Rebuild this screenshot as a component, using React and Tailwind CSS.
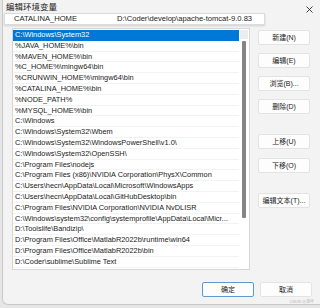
import React from "react";

const paths = [
  "C:\\Windows\\System32",
  "%JAVA_HOME%\\bin",
  "%MAVEN_HOME%\\bin",
  "%C_HOME%\\mingw64\\bin",
  "%CRUNWIN_HOME%\\mingw64\\bin",
  "%CATALINA_HOME%\\bin",
  "%NODE_PATH%",
  "%MYSQL_HOME%\\bin",
  "C:\\Windows",
  "C:\\Windows\\System32\\Wbem",
  "C:\\Windows\\System32\\WindowsPowerShell\\v1.0\\",
  "C:\\Windows\\System32\\OpenSSH\\",
  "C:\\Program Files\\nodejs",
  "C:\\Program Files (x86)\\NVIDIA Corporation\\PhysX\\Common",
  "C:\\Users\\hecn\\AppData\\Local\\Microsoft\\WindowsApps",
  "C:\\Users\\hecn\\AppData\\Local\\GitHubDesktop\\bin",
  "C:\\Program Files\\NVIDIA Corporation\\NVIDIA NvDLISR",
  "C:\\Windows\\system32\\config\\systemprofile\\AppData\\Local\\Micr...",
  "D:\\Toolslife\\Bandizip\\",
  "D:\\Program Files\\Office\\MatlabR2022b\\runtime\\win64",
  "D:\\Program Files\\Office\\MatlabR2022b\\bin",
  "D:\\Coder\\sublime\\Sublime Text",
];

function Btn({ children, className = "", primary = false }) {
  return (
    <div
      className={`h-[15px] w-[52px] shrink-0 flex items-center justify-center rounded-[2px] bg-[#fdfdfd] text-[7px] leading-[10px] text-[#1b1b1b] ${
        primary ? "border border-[#5b9bd5]" : "border border-[#e3e3e3]"
      } ${className}`}
    >
      {children}
    </div>
  );
}

export default function App() {
  return (
    <div
      className="relative w-[320px] h-[308px] overflow-hidden bg-[#e6e6e6]"
      style={{ fontFamily: '"Liberation Sans", "Noto Sans CJK SC", sans-serif' }}
    >
      <div className="ml-[2px] w-[318px] h-[305px] bg-[#f3f3f3] border-l border-b border-[#c9c9c9] rounded-bl-[6px]">
        {/* title bar */}
        <div className="h-[28px] flex items-start justify-between">
          <span className="mt-[1px] ml-[3px] text-[8.5px] leading-[12px] text-[#1a1a1a]">编辑环境变量</span>
          <svg width="7" height="7" viewBox="0 0 7 7" className="mt-[6px] mr-[7px]">
            <path d="M0.5 0.5 L6.5 6.5 M6.5 0.5 L0.5 6.5" stroke="#2a2a2a" strokeWidth="0.9" />
          </svg>
        </div>

        <div className="h-[242px] flex">
          {/* list */}
          <div className="ml-[9px] w-[238px] h-[242px] shrink-0 bg-white border border-[#d6d6d6] flex overflow-hidden">
            <div className="flex-1 pt-[1px] overflow-hidden">
              {paths.map((p, i) => (
                <div
                  key={i}
                  className={`h-[10.8px] leading-[10px] pl-[2px] whitespace-nowrap overflow-hidden text-[7.4px] ${
                    i === 0
                      ? "bg-[#0078d7] text-white"
                      : "text-[#1a1a1a] border-b border-[#f3f3f3]"
                  }`}
                >
                  {p}
                </div>
              ))}
            </div>
            {/* scrollbar */}
            <div className="w-[10px] shrink-0 flex flex-col items-center pt-[1px]">
              <div className="w-[8px] h-[9px] bg-[#ececec]" />
              <div className="mt-[2px] w-[4px] h-[177px] rounded-[1px] bg-[#858585]" />
            </div>
          </div>

          {/* buttons */}
          <div className="ml-[8px] pt-[2px] flex flex-col">
            <Btn>新建(N)</Btn>
            <Btn className="mt-[8px]">编辑(E)</Btn>
            <Btn className="mt-[8px]">浏览(B)...</Btn>
            <Btn className="mt-[8px]">删除(D)</Btn>
            <Btn className="mt-[20px]">上移(U)</Btn>
            <Btn className="mt-[9px]">下移(O)</Btn>
            <Btn className="mt-[20px]">编辑文本(T)...</Btn>
          </div>
        </div>

        {/* bottom buttons */}
        <div className="mt-[12px] h-[15px] flex justify-end pr-[8px] gap-[6px]">
          <Btn primary>确定</Btn>
          <Btn>取消</Btn>
        </div>
        <div className="mt-[2px] h-[6px] flex justify-end pr-[6px]">
          <span className="text-[4px] leading-[6px] text-[#b5b5b5]">CSDN @湛年</span>
        </div>
      </div>

      {/* floating variable tooltip */}
      <div className="absolute left-[4px] top-[13px] w-[261px] h-[12px] bg-white border border-[#dcdcdc] shadow-[0_1px_2px_rgba(0,0,0,0.15)] flex items-center text-[7.6px] text-[#1a1a1a] whitespace-nowrap">
        <span className="ml-[9px] w-[103px]">CATALINA_HOME</span>
        <span>D:\Coder\develop\apache-tomcat-9.0.83</span>
      </div>
    </div>
  );
}
